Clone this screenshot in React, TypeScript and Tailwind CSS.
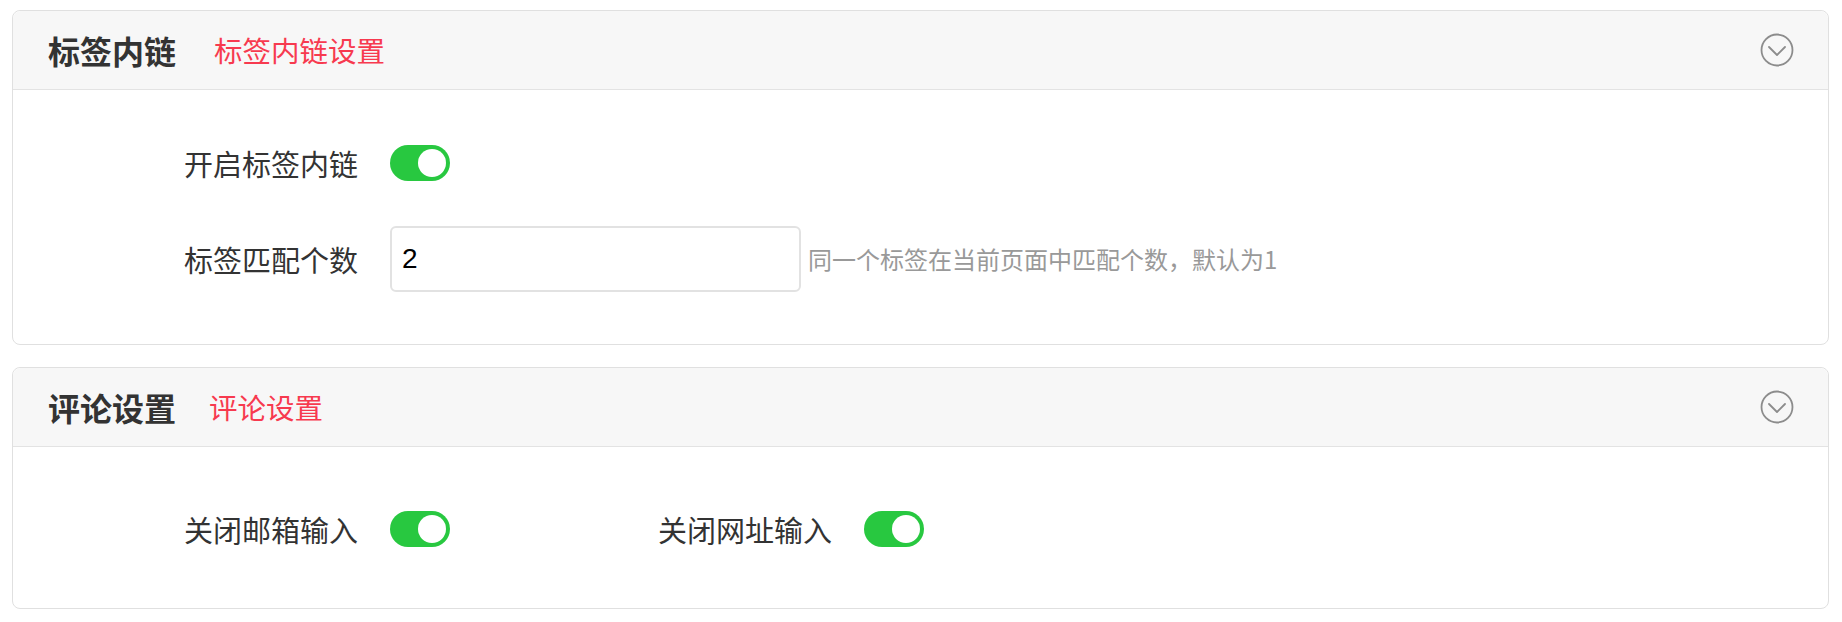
import React from "react";

const font = { fontFamily: '"Noto Sans CJK SC", "Noto Sans", sans-serif' };

function Chevron() {
  return (
    <svg width="34" height="34" viewBox="0 0 34 34" fill="none">
      <circle cx="17" cy="17" r="15.5" stroke="#8c8c8c" strokeWidth="1.8" />
      <path d="M9 14 L17 22 L25 14" stroke="#8c8c8c" strokeWidth="1.8" strokeLinecap="round" strokeLinejoin="round" />
    </svg>
  );
}

function Toggle() {
  return (
    <div className="relative w-[60px] h-[36px] rounded-full bg-[#28c840] shrink-0">
      <div className="absolute right-[4px] top-[4px] w-[28px] h-[28px] rounded-full bg-white" />
    </div>
  );
}

function Header({ title, sub, subClass }: { title: string; sub: string; subClass: string }) {
  return (
    <div className="h-[79px] bg-[#f7f7f7] border-b border-[#e3e3e3] flex items-center pl-[35px] pr-[34px] rounded-t-[8px]">
      <span className="text-[32px] font-bold text-[#333333] leading-none">{title}</span>
      <span className={subClass}>{sub}</span>
      <div className="ml-auto flex items-center">
        <Chevron />
      </div>
    </div>
  );
}

export default function App() {
  return (
    <div className="w-[1842px] h-[622px] bg-white pt-[10px] pl-[12px] pr-[13px] flex flex-col gap-[22px]" style={font}>
      <div className="border border-[#e0e0e0] rounded-[8px] bg-white">
        <Header title="标签内链" sub="标签内链设置" subClass="text-[28.5px] text-[#f73a4f] leading-none ml-[38px]" />
        <div className="pl-[171px] pt-[55px] pb-[52px] flex flex-col gap-[45px]">
          <div className="flex items-center h-[36px] gap-[30px]">
            <span className="w-[176px] text-[29px] text-[#333333] leading-none">开启标签内链</span>
            <Toggle />
          </div>
          <div className="flex items-center h-[66px] gap-[30px]">
            <span className="w-[176px] text-[29px] text-[#333333] leading-none">标签匹配个数</span>
            <div className="w-[411px] h-[66px] border-2 border-[#e2e2e2] rounded-[6px] flex items-center px-[10px]">
              <span className="text-[28px] text-black leading-none" style={{ fontFamily: '"Liberation Sans", Arial, sans-serif' }}>2</span>
            </div>
            <span className="-ml-[23px] text-[24px] text-[#999999] leading-none">同一个标签在当前页面中匹配个数，默认为1</span>
          </div>
        </div>
      </div>
      <div className="border border-[#e0e0e0] rounded-[8px] bg-white">
        <Header title="评论设置" sub="评论设置" subClass="text-[28.5px] text-[#f73a4f] leading-none ml-[33px]" />
        <div className="pl-[171px] pt-[64px] pb-[61px] flex items-center">
          <div className="flex items-center h-[36px] gap-[30px]">
            <span className="w-[176px] text-[29px] text-[#333333] leading-none">关闭邮箱输入</span>
            <Toggle />
          </div>
          <div className="flex items-center h-[36px] gap-[30px] ml-[208px]">
            <span className="w-[176px] text-[29px] text-[#333333] leading-none">关闭网址输入</span>
            <Toggle />
          </div>
        </div>
      </div>
    </div>
  );
}
